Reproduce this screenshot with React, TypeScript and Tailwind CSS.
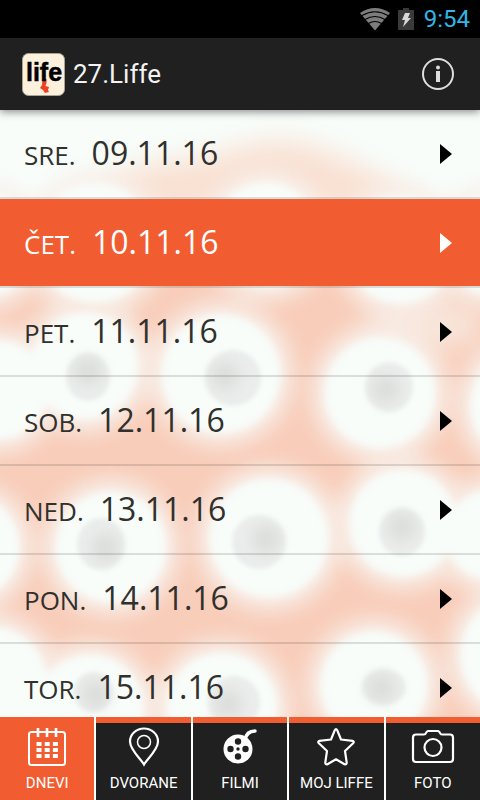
import { useState } from "react";
import type { ReactNode } from "react";

type Day = { id: string; name: string; date: string };

type Tab = { id: string; label: string; icon: ReactNode };

const days: Day[] = [
  { id: "sre", name: "SRE.", date: "09.11.16" },
  { id: "cet", name: "ČET.", date: "10.11.16" },
  { id: "pet", name: "PET.", date: "11.11.16" },
  { id: "sob", name: "SOB.", date: "12.11.16" },
  { id: "ned", name: "NED.", date: "13.11.16" },
  { id: "pon", name: "PON.", date: "14.11.16" },
  { id: "tor", name: "TOR.", date: "15.11.16" },
];

const CalendarIcon = () => (
  <svg className="size-10" viewBox="0 0 40 40" fill="none" stroke="currentColor" strokeWidth="2">
    <rect x="2" y="5" width="36" height="33" rx="2.5" />
    <path d="M11 1v9M20 1v9M29 1v9" strokeWidth="2.6" />
    <path d="M9.500 17h21.400M9.500 23h21.400M9.500 29h21.400" strokeWidth="4" strokeDasharray="5 3.200" />
  </svg>
);

const PinIcon = () => (
  <svg className="size-10" viewBox="0 0 40 40" fill="none" stroke="currentColor" strokeWidth="2.200">
    <path d="M20 37.500C17 32 6 23 6 14.500a14 13 0 0 1 28 0C34 23 23 32 20 37.500Z" />
    <circle cx="20" cy="15" r="6.500" strokeWidth="1.500" />
  </svg>
);

const ReelIcon = () => (
  <svg className="size-10" viewBox="0 0 40 40">
    <path d="M25 13C26 7 29 4 35 4" fill="none" stroke="currentColor" strokeWidth="3.500" strokeLinecap="round" />
    <circle cx="18" cy="22" r="14.500" fill="currentColor" />
    <g fill="#202020">
      <circle cx="18" cy="14.500" r="3.200" />
      <circle cx="10.500" cy="22" r="3.200" />
      <circle cx="25.500" cy="22" r="3.200" />
      <circle cx="18" cy="29.500" r="3.200" />
      <circle cx="18" cy="22" r="1.700" />
    </g>
  </svg>
);

const StarIcon = () => (
  <svg className="size-10" viewBox="0 0 40 40" fill="none" stroke="currentColor" strokeWidth="2.200" strokeLinejoin="round">
    <path d="M18.800 3.200q1.200-2 2.400 0L25 12.500l11.500 1.300q2.200.6.600 2.400L29 24l1.700 11.500q0 2.400-2.200 1.700L20 32.300l-8.500 4.900q-2.200.7-2.200-1.700L11 24l-8.100-7.800q-1.600-1.800.6-2.400L15 12.500Z" />
  </svg>
);

const CameraIcon = () => (
  <svg className="h-10 w-11" viewBox="0 0 44 40" fill="none" stroke="currentColor" strokeWidth="2.200">
    <path d="M5 7.500H13q1.500 0 2-1.500t2-2h10q1.500.500 2 2t2 1.500h8q3 0 3 3v21.500q0 3-3 3h-34q-3 0-3-3v-21.500q0-3 3-3Z" />
    <circle cx="22" cy="20.500" r="8.500" />
  </svg>
);

const tabs: Tab[] = [
  { id: "dnevi", label: "DNEVI", icon: <CalendarIcon /> },
  { id: "dvorane", label: "DVORANE", icon: <PinIcon /> },
  { id: "filmi", label: "FILMI", icon: <ReelIcon /> },
  { id: "moj", label: "MOJ LIFFE", icon: <StarIcon /> },
  { id: "foto", label: "FOTO", icon: <CameraIcon /> },
];

const StatusBar = () => (
  <div className="flex h-[38px] shrink-0 items-center justify-end bg-black px-[10px]">
    <svg className="h-6 w-[30px]" viewBox="0 0 30 24">
      <path d="M0 6Q15-4 30 6L15 23.500Z" fill="#7d7d7d" />
      <path d="M2 8.500Q15 1 28 8.500M5 12.500Q15 6.500 25 12.500M8.500 16.500Q15 12.500 21.500 16.500" fill="none" stroke="#000" strokeWidth="1.200" />
    </svg>
    <svg className="mr-[10px] ml-2 h-6 w-4" viewBox="0 0 16 24">
      <path d="M5 1h6v2h5v20H0V3h5Z" fill="#3a3a3a" />
      <path d="M7 6h5l-2 5h3l-8 9 2-7H4Z" fill="#d8d8d8" />
    </svg>
    <span className="text-2xl text-[#33b5e5]">9:54</span>
  </div>
);

const Header = () => (
  <header className="relative z-10 flex h-[72px] shrink-0 items-center bg-[#202020] pr-[26px] pl-[22px] shadow-[0_2px_8px_rgba(0,0,0,0.45)]">
    <svg className="size-[43px]" viewBox="0 0 43 43" role="img" aria-label="Liffe">
      <rect x=".5" y=".5" width="42" height="42" rx="6" fill="#fbf1dd" stroke="#aaa394" />
      <path d="M20.500 26h4v4l-1 3 3.500 1-1 3 1 2-4 1-2-3-3-2 2-3Z" fill="#ee4323" />
      <text x="22" y="28" textAnchor="middle" fontFamily="Liberation Sans" fontWeight="bold" fontSize="25" fill="#000" stroke="#000" strokeWidth=".5">
        life
      </text>
    </svg>
    <h1 className="ml-2 flex-1 text-[26px] text-[#f3f3f3]">27.Liffe</h1>
    <button aria-label="Info">
      <svg className="size-8" viewBox="0 0 32 32" fill="#dedede">
        <circle cx="16" cy="16" r="15" fill="none" stroke="#dedede" strokeWidth="2" />
        <circle cx="16" cy="9.500" r="2" />
        <path d="M14 13h4v11h-4Z" />
      </svg>
    </button>
  </header>
);

// cx, cy, radius of the white cells over the peach wash
const cells = [
  [95, 243, 60], [266, 235, 53], [400, 250, 54], [492, 245, 50], [-15, 245, 52],
  [-2, 390, 50], [85, 366, 54], [221, 374, 60], [380, 393, 56], [528, 405, 58],
  [-33, 547, 53], [111, 547, 56], [269, 538, 60], [403, 523, 54], [490, 535, 45],
  [-10, 684, 58], [90, 708, 54], [222, 708, 56], [374, 685, 54], [520, 655, 60],
];

// cx, cy, rx, ry and the offset of the darker spot inside each core
const cores = [
  [88, 377, 22, 24, 0, -12], [233, 378, 28, 28, -16, -4], [389, 387, 24, 25, -6, 5],
  [101, 544, 24, 26, 9, 7], [259, 542, 27, 27, 14, -6], [402, 532, 23, 24, 0, -10],
  [93, 692, 19, 20, 6, 5], [234, 702, 26, 26, -12, 4], [384, 687, 22, 18, -6, 2],
];

const Backdrop = () => (
  <svg
    className="absolute inset-0 size-full"
    viewBox="0 110 480 607"
    preserveAspectRatio="xMidYMin slice"
    aria-hidden="true"
  >
    <defs>
      <filter id="edge" x="-30%" y="-30%" width="160%" height="160%">
        <feGaussianBlur stdDeviation="4" />
      </filter>
      <filter id="halo" x="-30%" y="-30%" width="160%" height="160%">
        <feGaussianBlur stdDeviation="9" />
      </filter>
      <filter id="haze" x="-40%" y="-40%" width="180%" height="180%">
        <feGaussianBlur stdDeviation="14" />
      </filter>
      <filter id="soft" x="-30%" y="-30%" width="160%" height="160%">
        <feGaussianBlur stdDeviation="2" />
      </filter>
      <filter id="spot" x="-30%" y="-30%" width="160%" height="160%">
        <feGaussianBlur stdDeviation="7" />
      </filter>
    </defs>
    <rect y="110" width="480" height="607" fill="#f8fdfa" />
    <g filter="url(#haze)">
      <rect x="-60" y="255" width="600" height="540" fill="#f8cdba" />
      <path d="M60 215Q120 165 165 162Q200 160 240 148Q290 130 340 158Q400 180 430 215Z" fill="#f9e0d2" />
      <ellipse cx="425" cy="325" rx="60" ry="24" fill="#f8e6dc" />
    </g>
    <g filter="url(#halo)" fill="#f8f0ea" opacity="0.8">
      {cells.map(([cx, cy, r]) => (
        <circle key={`${cx}-${cy}`} cx={cx} cy={cy} r={r + 14} />
      ))}
    </g>
    <g filter="url(#edge)" fill="#f8fdfa">
      {cells.map(([cx, cy, r]) => (
        <circle key={`${cx}-${cy}`} cx={cx} cy={cy} r={r} />
      ))}
    </g>
    <g filter="url(#soft)" fill="#eaedeb">
      {cores.map(([cx, cy, rx, ry]) => (
        <ellipse key={`${cx}-${cy}`} cx={cx} cy={cy} rx={rx} ry={ry} />
      ))}
    </g>
    <g filter="url(#spot)" fill="#d8dad8" opacity="0.8">
      {cores.map(([cx, cy, , , dx, dy]) => (
        <circle key={`${cx}-${cy}`} cx={cx + dx * 0.5} cy={cy + dy * 0.5} r="14" />
      ))}
    </g>
  </svg>
);

type DayRowProps = { day: Day; active: boolean; onSelect: () => void };

const DayRow = ({ day, active, onSelect }: DayRowProps) => (
  <li className="border-b-2 border-black/12">
    <button
      className={`flex h-[87px] w-full items-center justify-between pr-7 pl-6 ${
        active ? "bg-[#f15c30] text-white" : "text-[#30302d]"
      }`}
      onClick={onSelect}
    >
      <span className="flex items-baseline gap-4 font-['Open_Sans',sans-serif]">
        <span className="text-[26px]">{day.name}</span>
        <span className="text-[32px] leading-10">{day.date}</span>
      </span>
      <svg className={active ? "h-5 w-3 text-white" : "h-5 w-3 text-black"} viewBox="0 0 12 20" fill="currentColor">
        <path d="M0 0L12 10L0 20Z" />
      </svg>
    </button>
  </li>
);

const App = () => {
  const [activeDay, setActiveDay] = useState<string>("cet");
  const [activeTab, setActiveTab] = useState<string>("dnevi");

  return (
    <div className="flex h-screen flex-col font-[Roboto,sans-serif]">
      <StatusBar />
      <Header />

      <main className="relative min-h-0 flex-1 overflow-hidden">
        <Backdrop />
        <ul className="relative">
          {days.map((day) => (
            <DayRow
              key={day.id}
              day={day}
              active={day.id === activeDay}
              onSelect={() => setActiveDay(day.id)}
            />
          ))}
        </ul>
      </main>

      <nav className="grid h-[83px] shrink-0 grid-cols-5 gap-[2px] bg-white">
        {tabs.map((tab) => (
          <button
            key={tab.id}
            className={`flex flex-col items-center border-t-6 border-[#f15c30] pt-1 text-[15px] whitespace-nowrap text-white ${
              tab.id === activeTab ? "bg-[#f15c30]" : "bg-[#202020]"
            }`}
            onClick={() => setActiveTab(tab.id)}
          >
            {tab.icon}
            <span className="mt-1 leading-6">{tab.label}</span>
          </button>
        ))}
      </nav>
    </div>
  );
};

export default App;
